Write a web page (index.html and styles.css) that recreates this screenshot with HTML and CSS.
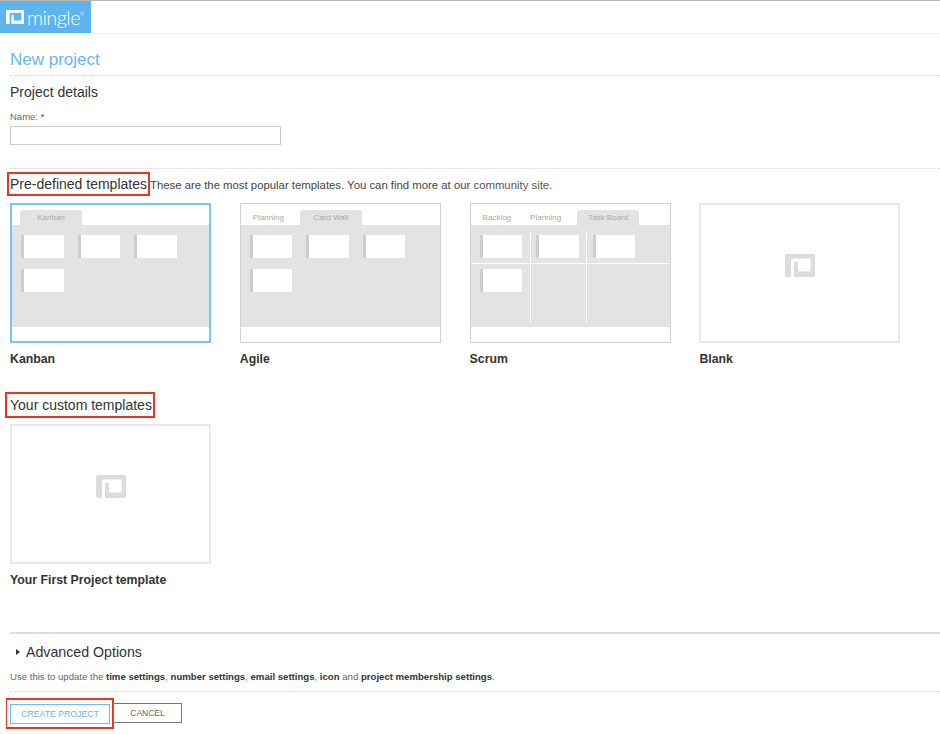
FILE: index.html
```html
<!DOCTYPE html>
<html lang="en">
<head>
    <meta charset="UTF-8">
    <title>New project - Mingle</title>
    <link rel="stylesheet" href="styles.css">
</head>
<body>
    <div class="header">
        <a class="logo" href="#">
            <svg class="logo-icon" viewBox="0 0 30 23"><use href="#mark"></use></svg>
            <span class="logo-text">mingle<sup class="logo-reg">®</sup></span>
        </a>
    </div>

    <svg class="defs" width="0" height="0">
        <symbol id="mark" viewBox="0 0 30 23">
            <path fill-rule="evenodd" d="M2 0H28a2 2 0 0 1 2 2V21a2 2 0 0 1-2 2H9V9.5Q9 7.5 11 7.5Q13 7.5 13 9.5V17.5H25.5V4.5H8.5Q6 4.5 6 7V23H2a2 2 0 0 1-2-2V2A2 2 0 0 1 2 0Z"></path>
        </symbol>
    </svg>

    <div class="content">
        <h1 class="page-title">New project</h1>

        <div class="details">
            <h2 class="section-title">Project details</h2>
            <label class="field-label" for="project-name">Name: <span class="required">*</span></label>
            <input class="text-input" id="project-name" type="text">
        </div>

        <div class="templates">
            <div class="templates-head">
                <h2 class="section-title marked">Pre-defined templates</h2>
                <span class="templates-note">These are the most popular templates. You can find more at our <a href="#">community site.</a></span>
            </div>
            <div class="template-row">
                <div class="template">
                    <div class="thumb selected">
                        <div class="tabs">
                            <span class="tab active">Kanban</span>
                        </div>
                        <div class="board">
                            <div class="mini-card"></div>
                            <div class="mini-card"></div>
                            <div class="mini-card"></div>
                            <div class="mini-card"></div>
                        </div>
                    </div>
                    <div class="template-name">Kanban</div>
                </div>
                <div class="template">
                    <div class="thumb">
                        <div class="tabs">
                            <span class="tab">Planning</span>
                            <span class="tab active">Card Wall</span>
                        </div>
                        <div class="board">
                            <div class="mini-card"></div>
                            <div class="mini-card"></div>
                            <div class="mini-card"></div>
                            <div class="mini-card"></div>
                        </div>
                    </div>
                    <div class="template-name">Agile</div>
                </div>
                <div class="template">
                    <div class="thumb">
                        <div class="tabs">
                            <span class="tab">Backlog</span>
                            <span class="tab">Planning</span>
                            <span class="tab active">Task Board</span>
                        </div>
                        <div class="board scrum">
                            <div class="lane-line first"></div>
                            <div class="lane-line second"></div>
                            <div class="row-line"></div>
                            <div class="mini-card"></div>
                            <div class="mini-card"></div>
                            <div class="mini-card"></div>
                            <div class="mini-card"></div>
                        </div>
                    </div>
                    <div class="template-name">Scrum</div>
                </div>
                <div class="template">
                    <div class="thumb blank">
                        <svg class="blank-mark" viewBox="0 0 30 23"><use href="#mark"></use></svg>
                    </div>
                    <div class="template-name">Blank</div>
                </div>
            </div>
        </div>

        <div class="custom-templates">
            <h2 class="section-title marked">Your custom templates</h2>
            <div class="template-row">
                <div class="template">
                    <div class="thumb blank">
                        <svg class="blank-mark" viewBox="0 0 30 23"><use href="#mark"></use></svg>
                    </div>
                    <div class="template-name">Your First Project template</div>
                </div>
            </div>
        </div>

        <div class="advanced">
            <div class="advanced-head">
                <span class="arrow"></span>
                <h2 class="section-title">Advanced Options</h2>
            </div>
            <p class="advanced-note">Use this to update the <b>time settings</b>, <b>number settings</b>, <b>email settings</b>, <b>icon</b> and <b>project membership settings</b>.</p>
        </div>

        <div class="actions">
            <div class="marked-button">
                <button class="button primary">CREATE PROJECT</button>
            </div>
            <button class="button cancel">CANCEL</button>
        </div>
    </div>
</body>
</html>
```

FILE: styles.css
```css
* {
    box-sizing: border-box;
}

body {
    margin: 0;
    background-color: #fff;
    color: #333;
    font-family: "Liberation Sans", Arial, sans-serif;
    overflow: hidden;
}

.defs {
    display: block;
}

.header {
    height: 34px;
    border-top: 1px solid #b8b8b8;
    border-bottom: 1px solid #f1f1f1;
}

.logo {
    display: flex;
    align-items: center;
    gap: 3px;
    width: 91px;
    height: 32px;
    padding-left: 6px;
    background-color: #5db4ee;
    color: #fff;
    text-decoration: none;
}

.logo-icon {
    width: 18px;
    height: 14px;
    fill: #fff;
}

.logo-text {
    font-family: "Lato", "Open Sans", sans-serif;
    font-size: 20px;
    font-weight: 300;
    line-height: 28px;
    letter-spacing: -0.6px;
}

.logo-reg {
    font-size: 5px;
    vertical-align: 9px;
    line-height: 0;
}

.content {
    padding-left: 10px;
}

.page-title {
    margin: 0;
    height: 42px;
    padding-top: 15px;
    border-bottom: 1px dotted #d4d4d4;
    color: #68b7ee;
    font-size: 17px;
    font-weight: normal;
    line-height: 22px;
}

.section-title {
    margin: 0;
    color: #333;
    font-size: 14px;
    font-weight: normal;
    line-height: 18px;
}

.details {
    height: 93px;
    padding-top: 7px;
    border-bottom: 1px dotted #d4d4d4;
}

.field-label {
    display: block;
    margin-top: 10px;
    color: #666;
    font-size: 9.5px;
    line-height: 12px;
}

.required {
    color: #d9262c;
}

.text-input {
    display: block;
    width: 271px;
    height: 19px;
    margin-top: 3px;
    border: 1px solid #ccc;
    background-color: #fff;
}

.templates-head {
    display: flex;
    align-items: center;
    height: 24px;
    margin-top: 3px;
    margin-bottom: 7px;
}

.marked {
    margin-left: -3px;
    padding: 1px;
    border: 2px solid #e8371f;
}

.templates-note {
    margin-top: 2px;
    color: #444;
    font-size: 11.35px;
}

.templates-note a {
    color: #555;
    text-decoration: none;
}

.template-row {
    display: flex;
    gap: 28.8px;
}

.template {
    width: 201px;
}

.thumb {
    display: flex;
    flex-direction: column;
    width: 201px;
    height: 140px;
    border: 1px solid #d0d0d0;
    background-color: #fff;
}

.thumb.selected {
    border: 2px solid #7cc5f3;
}

.thumb.blank {
    align-items: center;
    justify-content: center;
    border: 2px solid #e8e8e8;
}

.blank-mark {
    width: 30px;
    height: 23px;
    margin: 0 0 16px 1px;
    fill: #dcdcdc;
}

.tabs {
    display: flex;
    flex-shrink: 0;
    height: 21px;
    padding: 6px 0 0 9px;
    font-size: 8px;
    line-height: 15px;
    color: #a8a8a8;
}

.selected .tabs {
    height: 20px;
    padding: 5px 0 0 8px;
}

.tab {
    height: 15px;
    padding: 0 16px 0 3px;
}

.tab.active {
    width: 62px;
    padding: 0;
    border-radius: 3px 3px 0 0;
    background-color: #e3e3e3;
    text-align: center;
}

.board {
    position: relative;
    display: grid;
    grid-template-columns: repeat(3, 42.5px);
    grid-auto-rows: 23px;
    column-gap: 14px;
    row-gap: 11px;
    height: 102px;
    padding: 10px 0 0 9px;
    background-color: #e3e3e3;
}

.mini-card {
    border-left: 3px solid #cdcdcd;
    background-color: #fff;
}

.lane-line {
    position: absolute;
    top: 8px;
    width: 1px;
    height: 89px;
    background-color: #fff;
}

.lane-line.first {
    left: 59px;
}

.lane-line.second {
    left: 115px;
}

.row-line {
    position: absolute;
    top: 38px;
    left: 0;
    right: 0;
    height: 1px;
    background-color: #fff;
}

.template-name {
    margin-top: 9px;
    color: #333;
    font-size: 12.3px;
    font-weight: bold;
    line-height: 15px;
}

.custom-templates {
    margin-top: 25px;
}

.custom-templates .marked {
    display: inline-block;
    margin-left: -5px;
    height: 26px;
    padding: 2px 1px 0 3px;
}

.custom-templates .template-row {
    margin-top: 6px;
}

.advanced {
    height: 60px;
    margin-top: 44px;
    border-top: 2px solid #ddd;
    border-bottom: 1px dotted #d4d4d4;
}

.advanced-head {
    display: flex;
    align-items: center;
    gap: 6px;
    height: 18px;
    margin-top: 9px;
    padding-left: 6px;
}

.advanced-head .section-title {
    font-size: 14.2px;
}

.arrow {
    width: 0;
    height: 0;
    border-top: 3px solid transparent;
    border-bottom: 3px solid transparent;
    border-left: 4px solid #333;
}

.advanced-note {
    margin: 10px 0 0;
    color: #666;
    font-size: 9.6px;
    line-height: 12px;
}

.advanced-note b {
    color: #333;
}

.actions {
    display: flex;
    align-items: flex-start;
    margin-top: 6px;
    margin-left: -4px;
}

.marked-button {
    padding: 4px 2px 3px 3px;
    border: 2px solid #e8371f;
    border-width: 2px 2px 2px 1px;
}

.button {
    display: block;
    width: 69px;
    height: 20px;
    margin-top: 5px;
    border: 1px solid #777;
    background-color: #fff;
    color: #666;
    font-family: "Liberation Sans", Arial, sans-serif;
    font-size: 8.5px;
    padding: 0;
}

.button.cancel {
    margin-left: -1px;
}

.button.primary {
    width: 100px;
    margin-top: 0;
    border-color: #6cbcf0;
    color: #6ab6ec;
    font-size: 8.7px;
}
```
